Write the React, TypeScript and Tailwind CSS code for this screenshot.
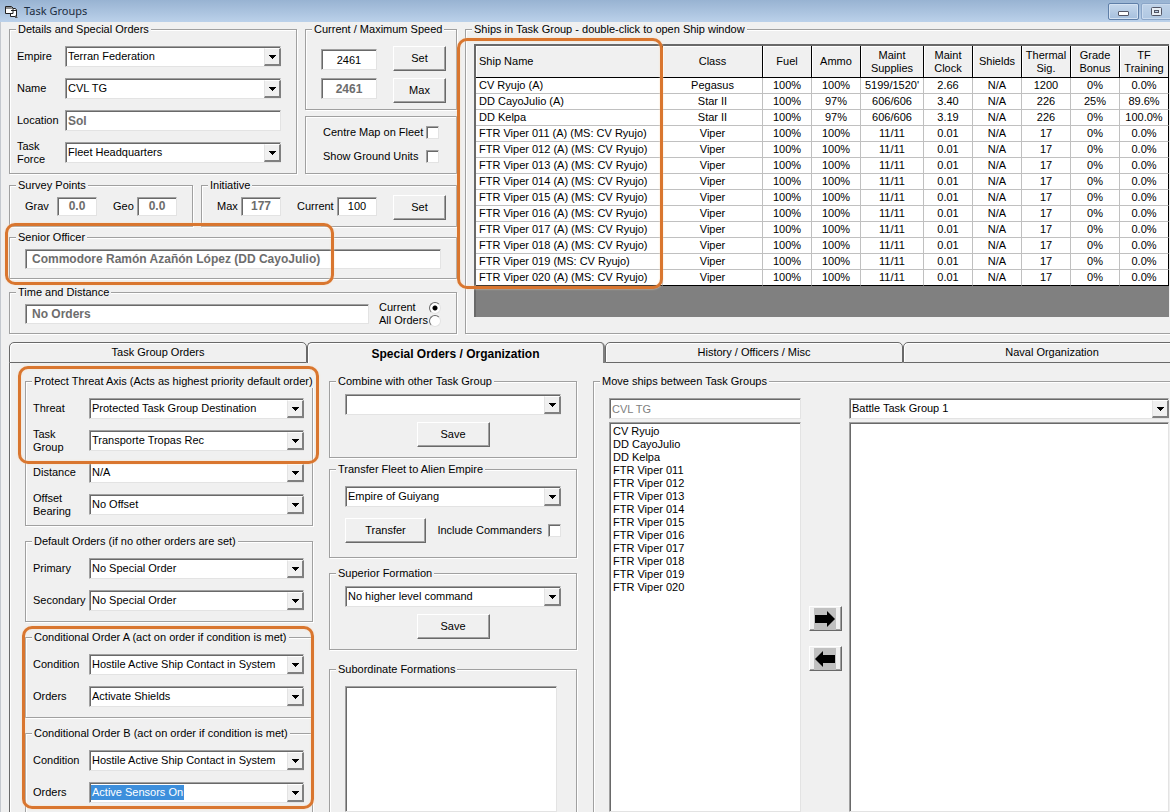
import { ReactNode, useId } from "react";
import clsx from "clsx";

const SHIPS = [
  ["CV Ryujo (A)", "Pegasus", "100%", "100%", "5199/1520'", "2.66", "N/A", "1200", "0%", "0.0%"],
  ["DD CayoJulio (A)", "Star II", "100%", "97%", "606/606", "3.40", "N/A", "226", "25%", "89.6%"],
  ["DD Kelpa", "Star II", "100%", "97%", "606/606", "3.19", "N/A", "226", "0%", "100.0%"],
  ...["011 (A)", "012 (A)", "013 (A)", "014 (A)", "015 (A)", "016 (A)", "017 (A)", "018 (A)", "019", "020 (A)"].map(
    (n) => [`FTR Viper ${n} (MS: CV Ryujo)`, "Viper", "100%", "100%", "11/11", "0.01", "N/A", "17", "0%", "0.0%"]
  ),
];

const COLUMNS = [
  { label: "Ship Name", width: "w-auto" },
  { label: "Class", width: "w-[100px]" },
  { label: "Fuel", width: "w-[49px]" },
  { label: "Ammo", width: "w-[49px]" },
  { label: "Maint Supplies", width: "w-[63px]" },
  { label: "Maint Clock", width: "w-[49px]" },
  { label: "Shields", width: "w-[49px]" },
  { label: "Thermal Sig.", width: "w-[49px]" },
  { label: "Grade Bonus", width: "w-[49px]" },
  { label: "TF Training", width: "w-[49px]" },
];

const GROUP_SHIPS = [
  "CV Ryujo",
  "DD CayoJulio",
  "DD Kelpa",
  ...["011", "012", "013", "014", "015", "016", "017", "018", "019", "020"].map((n) => `FTR Viper ${n}`),
];

const TABS = ["Task Group Orders", "Special Orders / Organization", "History / Officers / Misc", "Naval Organization"];
const ACTIVE_TAB = 1;

// Classic sunken edge shared by text boxes, combos and lists
const SUNKEN =
  "border border-t-[#a0a0a0] border-l-[#a0a0a0] border-r-[#e3e3e3] border-b-[#e3e3e3] shadow-[inset_1px_1px_0_#696969] bg-white rounded-none outline-none";

function Group({
  title,
  className,
  bodyClass,
  children,
}: {
  title?: string;
  className?: string;
  bodyClass?: string;
  children: ReactNode;
}) {
  return (
    <fieldset
      className={clsx(
        "flex min-w-0 flex-col border border-[#a0a0a0] shadow-[1px_1px_0_#fff,inset_1px_1px_0_#fff]",
        className
      )}
    >
      {title && (
        <legend className="ml-[6px] h-[13px] bg-[#f0f0f0] px-[2px] leading-[13px] whitespace-nowrap">{title}</legend>
      )}
      <div className={clsx("min-h-0 flex-1", bodyClass)}>{children}</div>
    </fieldset>
  );
}

function Combo({
  id,
  value,
  label,
  selected,
  className,
}: {
  id?: string;
  value: string;
  label?: string;
  selected?: boolean;
  className?: string;
}) {
  return (
    <div className={clsx("relative h-[21px]", className)}>
      <select
        id={id}
        aria-label={label}
        className={clsx(
          SUNKEN,
          "h-full w-full appearance-none pr-[18px] pl-[2px]",
          selected && "text-transparent"
        )}
      >
        <option>{value}</option>
      </select>
      {selected && (
        <span className="pointer-events-none absolute top-[3px] left-[2px] h-[15px] bg-[#3d8fdc] px-px leading-[15px] text-white">
          {value}
        </span>
      )}
      <span className="pointer-events-none absolute top-[2px] right-0 bottom-px flex w-[17px] items-center justify-center border-t border-r-2 border-b-2 border-l border-t-white border-r-[#808080] border-b-[#808080] border-l-[#e3e3e3] bg-[#f0f0f0]">
        <svg width="7" height="4" viewBox="0 0 7 4" shapeRendering="crispEdges">
          <path d="M0 0h7L3.500 4z" fill="#000" />
        </svg>
      </span>
    </div>
  );
}

function ComboRow({
  label,
  value,
  labelWidth = "w-[56px]",
  selected,
}: {
  label: string;
  value: string;
  labelWidth?: string;
  selected?: boolean;
}) {
  const id = useId();
  return (
    <div className="flex h-[21px] items-center">
      <label htmlFor={id} className={clsx("shrink-0 leading-[13px]", labelWidth)}>
        {label}
      </label>
      <Combo id={id} value={value} selected={selected} className="min-w-0 flex-1" />
    </div>
  );
}

function Field({
  label,
  value,
  disabled,
  className,
}: {
  label: string;
  value: string;
  disabled?: boolean;
  className?: string;
}) {
  return (
    <input
      aria-label={label}
      defaultValue={value}
      readOnly={disabled}
      className={clsx(SUNKEN, disabled && "text-[12px] font-bold text-[#6d6d6d]", className)}
    />
  );
}

function Button({ children, className, label }: { children: ReactNode; className?: string; label?: string }) {
  return (
    <button
      aria-label={label}
      className={clsx(
        "flex h-[25px] items-center justify-center border border-t-white border-r-[#696969] border-b-[#696969] border-l-white bg-[#f0f0f0] shadow-[inset_-1px_-1px_0_#a0a0a0]",
        className
      )}
    >
      {children}
    </button>
  );
}

function Check({ label, className }: { label: string; className?: string }) {
  return (
    <label className={clsx("flex h-[13px] items-center leading-[13px] whitespace-nowrap", className)}>
      {label}
      <input type="checkbox" className={clsx(SUNKEN, "h-[13px] w-[13px] appearance-none")} />
    </label>
  );
}

function Radio({ label, checked }: { label: string; checked?: boolean }) {
  return (
    <label className="flex h-[13px] items-center justify-between leading-[13px] whitespace-nowrap">
      {label}
      <input
        type="radio"
        name="range"
        defaultChecked={checked}
        className="h-[12px] w-[12px] appearance-none rounded-full border border-t-[#696969] border-r-[#e3e3e3] border-b-[#e3e3e3] border-l-[#696969] bg-white checked:bg-[radial-gradient(circle,#000_2px,#fff_3px)]"
      />
    </label>
  );
}

function ListBox({ label, items = [], className }: { label: string; items?: string[]; className?: string }) {
  return (
    <select multiple aria-label={label} className={clsx(SUNKEN, "block overflow-hidden px-[3px] pt-[2px]", className)}>
      {items.map((item) => (
        <option key={item} className="h-[13px] min-h-0 p-0 leading-[13px]">
          {item}
        </option>
      ))}
    </select>
  );
}

function Marker({ className }: { className: string }) {
  return (
    <div
      className={clsx(
        "pointer-events-none absolute z-10 rounded-[10px] border-[3px] border-[#d9762f] shadow-[0_0_2px_#fbdcbc,inset_0_0_2px_#fbdcbc]",
        className
      )}
    />
  );
}

function TitleBar() {
  return (
    <header className="flex h-[22px] shrink-0 items-center overflow-hidden bg-linear-to-b from-[#98b3d2] to-[#bbd1ea] pl-[5px]">
      <svg width="13" height="13" viewBox="0 0 13 13">
        <path d="M5.500 3.500h5l1 1.500v6.500h-6z" fill="#fff" stroke="#222" />
        <path d="M.5 1.500h6l1.500 1.500v5.500H.5z" fill="#fff" stroke="#222" />
        <path d="M1 3h6.500M6 5.500h5" stroke="#222" />
        <path d="M10 10l3 3h-3z" fill="#555" />
      </svg>
      <h1 className="ml-[6px] flex-1 font-['Noto_Sans'] text-[11px] text-[#1c2c40]">Task Groups</h1>
      <div className="-mr-[2px] flex gap-[2px]">
        <button
          aria-label="Minimize"
          className="flex h-[17px] w-[31px] items-end justify-center rounded-[2px] border border-[#5f7fa8] bg-linear-to-b from-[#c6d8ec] to-[#a5bfdd] pb-[3px] shadow-[inset_0_0_0_1px_#d4e2f2]"
        >
          <span className="h-[5px] w-[11px] rounded-[1px] border border-[#535666] bg-white" />
        </button>
        <button
          aria-label="Restore"
          className="flex h-[17px] w-[31px] items-center justify-center rounded-[2px] border border-[#8ba6c8] bg-linear-to-b from-[#bfd2e8] to-[#afc7e2] shadow-[inset_0_0_0_1px_#cbdbee]"
        >
          <svg width="11" height="9" viewBox="0 0 11 9">
            <rect x="0.500" y="0.500" width="10" height="8" rx="1" fill="#e8eef5" stroke="#535666" />
            <rect x="3.500" y="3.500" width="4" height="2" fill="#bcd0e6" stroke="#535666" />
          </svg>
        </button>
      </div>
    </header>
  );
}

function ShipTable() {
  return (
    <div className="flex h-full flex-col border-t-2 border-l-2 border-[#696969] bg-[#808080]">
      <table className="w-full table-fixed border-separate border-spacing-0 bg-white text-center">
        <thead>
          <tr className="h-[32px]">
            {COLUMNS.map((col, i) => (
              <th
                key={col.label}
                className={clsx(
                  "border-r border-b border-black bg-[#f0f0f0] p-0 leading-[13px] font-normal shadow-[inset_1px_1px_0_#fff]",
                  col.width,
                  i === 0 && "pl-[3px] text-left"
                )}
              >
                {col.label}
              </th>
            ))}
          </tr>
        </thead>
        <tbody>
          {SHIPS.map((row, r) => (
            <tr key={row[0]} className="h-[16px]">
              {row.map((cell, i) => (
                <td
                  key={i}
                  className={clsx(
                    "overflow-hidden border-r border-b p-0 leading-[15px] whitespace-nowrap",
                    i === 0 && "pl-[3px] text-left",
                    i === row.length - 1 ? "border-r-black" : "border-r-[#c0c0c0]",
                    r === SHIPS.length - 1 ? "border-b-black" : "border-b-[#c0c0c0]"
                  )}
                >
                  {cell}
                </td>
              ))}
            </tr>
          ))}
        </tbody>
      </table>
    </div>
  );
}

function FleetPanel() {
  return (
    <div className="flex w-[448px] shrink-0 flex-col">
      <div className="flex gap-[8px]">
        <Group title="Details and Special Orders" className="w-[288px]" bodyClass="flex flex-col gap-[11px] pt-[10px] pr-[15px] pb-[10px] pl-[7px]">
          <ComboRow label="Empire" value="Terran Federation" labelWidth="w-[48px]" />
          <ComboRow label="Name" value="CVL TG" labelWidth="w-[48px]" />
          <div className="flex h-[21px] items-center">
            <span className="w-[48px] shrink-0">Location</span>
            <Field label="Location" value="Sol" disabled className="h-full min-w-0 flex-1 px-[2px]" />
          </div>
          <ComboRow label="Task Force" value="Fleet Headquarters" labelWidth="w-[48px] pr-[12px]" />
        </Group>

        <div className="flex flex-1 flex-col gap-[6px]">
          <Group title="Current / Maximum Speed" bodyClass="flex gap-[16px] pt-[10px] pb-[6px] pl-[15px]">
            <div className="flex flex-col gap-[8px] pt-[3px]">
              <Field label="Current speed" value="2461" className="h-[21px] w-[56px] text-center" />
              <Field label="Maximum speed" value="2461" disabled className="h-[21px] w-[56px] text-center" />
            </div>
            <div className="flex flex-col gap-[7px]">
              <Button className="w-[53px]">Set</Button>
              <Button className="w-[53px]">Max</Button>
            </div>
          </Group>
          <Group bodyClass="flex flex-col gap-[11px] px-[17px] pt-[9px] pb-[10px]">
            <Check label="Centre Map on Fleet" className="justify-between" />
            <Check label="Show Ground Units" className="justify-between" />
          </Group>
        </div>
      </div>

      <div className="mt-[5px] flex gap-[8px]">
        <Group title="Survey Points" className="w-[184px]" bodyClass="flex items-start pt-[5px] pl-[15px] leading-[19px]">
          <span className="w-[32px]">Grav</span>
          <Field label="Grav" value="0.0" disabled className="h-[19px] w-[40px] text-center" />
          <span className="ml-[16px] w-[24px]">Geo</span>
          <Field label="Geo" value="0.0" disabled className="h-[19px] w-[40px] text-center" />
        </Group>
        <Group title="Initiative" className="h-[48px] flex-1" bodyClass="flex items-start pt-[3px] pl-[15px] leading-[19px]">
          <div className="flex pt-[2px]">
            <span className="w-[24px]">Max</span>
            <Field label="Max" value="177" disabled className="h-[19px] w-[40px] text-center" />
            <span className="ml-[16px] w-[40px]">Current</span>
            <Field label="Current" value="100" className="h-[19px] w-[40px] text-center" />
          </div>
          <Button className="ml-[16px] w-[53px]">Set</Button>
        </Group>
      </div>

      <div className="relative mt-[4px]">
        <Group title="Senior Officer" bodyClass="px-[15px] pt-[5px] pb-[9px]">
          <Field
            label="Senior Officer"
            value="Commodore Ramón Azañón López (DD CayoJulio)"
            disabled
            className="block h-[20px] w-full px-[6px]"
          />
        </Group>
        <Marker className="-top-[8px] -left-[4px] h-[62px] w-[329px]" />
      </div>

      <Group title="Time and Distance" className="mt-[7px]" bodyClass="flex pt-[5px] pr-[15px] pb-[9px] pl-[15px]">
        <Field label="Time and Distance" value="No Orders" disabled className="h-[20px] w-[344px] px-[6px]" />
        <div className="-mt-[3px] -mb-[3px] ml-[10px] flex-1">
          <Radio label="Current" checked />
          <Radio label="All Orders" />
        </div>
      </Group>
    </div>
  );
}

function Tabs() {
  return (
    <div role="tablist" className="flex h-[21px] shrink-0 overflow-hidden">
      {TABS.map((tab, i) => (
        <button
          key={tab}
          role="tab"
          aria-selected={i === ACTIVE_TAB}
          className={clsx(
            "w-[298px] shrink-0 rounded-t-[5px] border-t border-l border-[#696969] shadow-[inset_1px_1px_0_#fff]",
            i === ACTIVE_TAB ? "border-r-2 border-r-[#808080] pt-[2px] text-[12px] font-bold" : "border-r border-b"
          )}
        >
          {tab}
        </button>
      ))}
    </div>
  );
}

function OrdersColumn() {
  const body = "flex flex-col gap-[11px] pt-[10px] pr-[8px] pb-[10px] pl-[7px]";
  return (
    <div className="flex w-[288px] shrink-0 flex-col gap-[9px]">
      <div className="relative">
        <Group title="Protect Threat Axis (Acts as highest priority default order)" bodyClass={body}>
          <ComboRow label="Threat" value="Protected Task Group Destination" />
          <ComboRow label="Task Group" value="Transporte Tropas Rec" labelWidth="w-[56px] pr-[16px]" />
          <ComboRow label="Distance" value="N/A" />
          <ComboRow label="Offset Bearing" value="No Offset" labelWidth="w-[56px] pr-[16px]" />
        </Group>
        <Marker className="-top-[9px] -right-[6px] -left-[7px] h-[98px]" />
      </div>
      <Group title="Default Orders (if no other orders are set)" bodyClass={body}>
        <ComboRow label="Primary" value="No Special Order" />
        <ComboRow label="Secondary" value="No Special Order" />
      </Group>
      <div className="relative flex flex-col gap-[9px]">
        <Group title="Conditional Order A (act on order if condition is met)" bodyClass={body}>
          <ComboRow label="Condition" value="Hostile Active Ship Contact in System" />
          <ComboRow label="Orders" value="Activate Shields" />
        </Group>
        <Group title="Conditional Order B (act on order if condition is met)" bodyClass={body}>
          <ComboRow label="Condition" value="Hostile Active Ship Contact in System" />
          <ComboRow label="Orders" value="Active Sensors On" selected />
        </Group>
        <Marker className="-top-[5px] -right-px -left-[3px] h-[183px]" />
      </div>
    </div>
  );
}

function FormationColumn() {
  return (
    <div className="flex w-[248px] shrink-0 flex-col">
      <Group title="Combine with other Task Group" bodyClass="px-[15px] pt-[6px] pb-[10px]">
        <Combo label="Combine with" value="" />
        <Button className="mx-auto mt-[7px] w-[73px]">Save</Button>
      </Group>
      <Group title="Transfer Fleet to Alien Empire" className="mt-[5px]" bodyClass="px-[15px] pt-[10px] pb-[14px]">
        <Combo label="Alien empire" value="Empire of Guiyang" />
        <div className="mt-[11px] flex items-center justify-between">
          <Button className="w-[81px]">Transfer</Button>
          <Check label="Include Commanders" className="gap-[6px]" />
        </div>
      </Group>
      <Group title="Superior Formation" className="mt-[9px]" bodyClass="px-[15px] pt-[6px] pb-[10px]">
        <Combo label="Superior formation" value="No higher level command" />
        <Button className="mx-auto mt-[7px] w-[73px]">Save</Button>
      </Group>
      <Group title="Subordinate Formations" className="mt-[13px] flex-1 border-b-0" bodyClass="flex pt-[10px] pr-[19px] pl-[15px]">
        <ListBox label="Subordinate formations" className="w-full" />
      </Group>
    </div>
  );
}

function Arrow({ left }: { left?: boolean }) {
  return (
    <span className="flex h-[22px] w-[22px] items-center justify-center bg-[#c0c0c0]">
      <svg width="20" height="16" viewBox="0 0 20 16" className={clsx(left && "rotate-180")}>
        <path d="M0 4h12V0l8 8-8 8v-4H0z" fill="#000" />
      </svg>
    </span>
  );
}

function MoveShips() {
  return (
    <Group title="Move ships between Task Groups" className="flex-1 border-r-0 border-b-0" bodyClass="flex pt-[10px] pr-px pl-[15px]">
      <div className="flex w-[192px] flex-col gap-[3px]">
        <input
          aria-label="Source task group"
          defaultValue="CVL TG"
          readOnly
          className={clsx(SUNKEN, "h-[21px] px-[2px] text-[#808080]")}
        />
        <ListBox label="Ships in source group" items={GROUP_SHIPS} className="flex-1" />
      </div>
      <div className="flex w-[48px] flex-col items-center gap-[15px] pt-[208px]">
        <Button label="Move right" className="w-[33px]">
          <Arrow />
        </Button>
        <Button label="Move left" className="w-[33px]">
          <Arrow left />
        </Button>
      </div>
      <div className="flex flex-1 flex-col gap-[3px]">
        <Combo label="Target task group" value="Battle Task Group 1" />
        <ListBox label="Ships in target group" className="flex-1" />
      </div>
    </Group>
  );
}

export default function App() {
  return (
    <div className="flex h-screen flex-col overflow-hidden bg-[#f0f0f0] font-['Liberation_Sans',sans-serif] text-[11px] text-black">
      <TitleBar />
      <main className="flex min-h-0 flex-1 flex-col border-l border-[#c4c8ce] pt-px pl-[8px]">
        <div className="flex shrink-0 gap-[8px]">
          <FleetPanel />
          <div className="relative flex flex-1">
            <Group
              title="Ships in Task Group - double-click to open Ship window"
              className="flex-1 border-r-0"
              bodyClass="pt-[8px] pr-px pb-[16px] pl-[8px]"
            >
              <ShipTable />
            </Group>
            <Marker className="top-[15px] -left-[8px] h-[251px] w-[206px]" />
          </div>
        </div>

        <div className="mt-[8px] flex min-h-0 flex-1 flex-col">
          <Tabs />
          <div className="flex min-h-0 flex-1 gap-[16px] border-l border-[#696969] pt-[12px] pl-[15px] shadow-[inset_1px_0_0_#fff]">
            <OrdersColumn />
            <FormationColumn />
            <MoveShips />
          </div>
        </div>
      </main>
    </div>
  );
}
